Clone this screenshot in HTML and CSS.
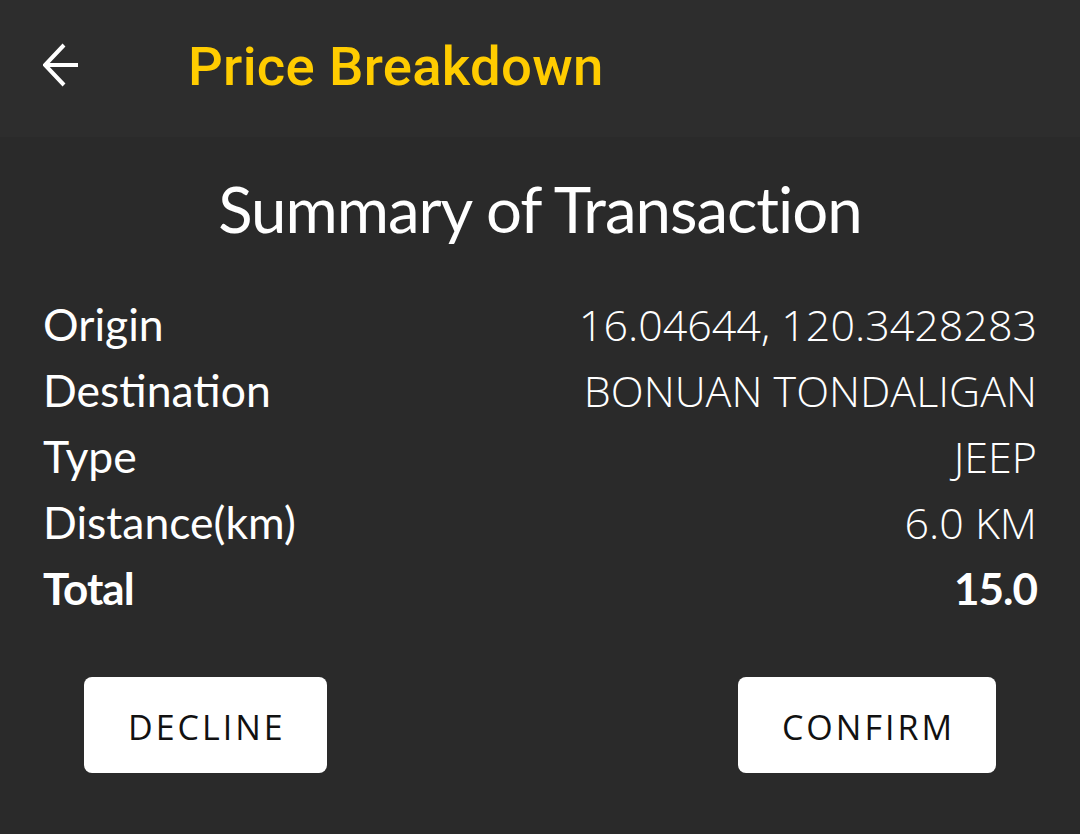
FILE: index.html
```html
<!DOCTYPE html>
<html>
<head>
<meta charset="utf-8">
<link rel="stylesheet" href="styles.css">
</head>
<body>
<div class="screen">
  <header class="appbar">
    <button class="back" aria-label="Back">
      <svg width="40" height="44" viewBox="0 0 40 44">
        <path d="M21 2 L2 22 L21 42 M2 22 H35" fill="none" stroke="#ffffff" stroke-width="4" stroke-linecap="butt" stroke-linejoin="miter"/>
      </svg>
    </button>
    <h1 class="title">Price Breakdown</h1>
  </header>
  <main class="content">
    <h2 class="summary">Summary of Transaction</h2>
    <div class="rows">
      <div class="row"><span class="label">Origin</span><span class="value">16.04644, 120.3428283</span></div>
      <div class="row"><span class="label">Destination</span><span class="value">BONUAN TONDALIGAN</span></div>
      <div class="row"><span class="label">Type</span><span class="value">JEEP</span></div>
      <div class="row"><span class="label">Distance(km)</span><span class="value">6.0 KM</span></div>
      <div class="row total"><span class="label">Total</span><span class="value">15.0</span></div>
    </div>
    <div class="actions">
      <button class="btn">DECLINE</button>
      <button class="btn">CONFIRM</button>
    </div>
  </main>
</div>
</body>
</html>
```

FILE: styles.css
```css
html, body {
  margin: 0;
  padding: 0;
  background: #2a2a2a;
}
.screen {
  width: 1080px;
  height: 834px;
  overflow: hidden;
  background: #2a2a2a;
  display: flex;
  flex-direction: column;
}
.appbar {
  height: 137px;
  background: #2d2d2d;
  display: flex;
  align-items: center;
  padding-left: 43px;
  box-sizing: border-box;
}
.back {
  background: none;
  border: 0;
  padding: 0;
  width: 40px;
  height: 44px;
  display: flex;
  margin-top: -8px;
}
.title {
  margin: -4px 0 0 105px;
  font-family: Roboto, "Noto Sans", sans-serif;
  font-weight: 500;
  font-size: 54.5px;
  letter-spacing: 0.3px;
  color: #ffcc00;
  line-height: 1;
}
.content {
  padding: 0 43px;
  color: #ffffff;
}
.summary {
  margin: 32px 0 0;
  text-align: center;
  font-family: Lato, "Noto Sans", sans-serif;
  font-weight: 400;
  font-size: 63.5px;
  line-height: 80px;
  letter-spacing: -1px;
}
.rows {
  margin-top: 42px;
}
.row {
  display: flex;
  justify-content: space-between;
  align-items: baseline;
  height: 66px;
  line-height: 66px;
}
.label {
  font-family: Lato, "Noto Sans", sans-serif;
  font-size: 44.5px;
  font-weight: 400;
}
.value {
  font-family: "Open Sans", "Noto Sans", sans-serif;
  font-size: 43px;
  font-weight: 300;
}
.total .label,
.total .value {
  font-family: Lato, "Noto Sans", sans-serif;
  font-weight: 700;
  font-size: 44px;
  letter-spacing: -1px;
}
.actions {
  display: flex;
  justify-content: space-between;
  padding: 0 41px;
  margin-top: 56px;
}
.btn {
  background: #ffffff;
  border: 0;
  border-radius: 8px;
  height: 96px;
  padding: 4px 41px 0 44px;
  font-family: "Open Sans", "Noto Sans", sans-serif;
  font-size: 34px;
  font-weight: 400;
  letter-spacing: 3px;
  color: #111111;
}
```
